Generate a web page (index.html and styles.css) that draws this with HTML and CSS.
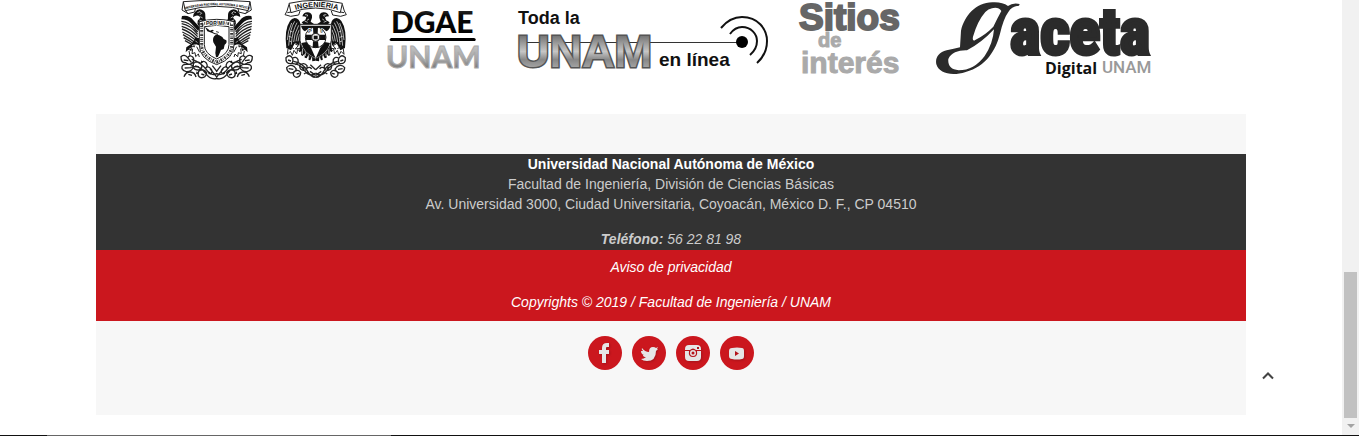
FILE: index.html
```html
<!DOCTYPE html>
<html lang="es">
<head>
<meta charset="utf-8">
<title>División de Ciencias Básicas</title>
<link rel="stylesheet" href="styles.css">
</head>
<body>
<div class="view">
  <div class="page">
    <nav class="logos" aria-label="Sitios relacionados">
      <a href="#" aria-label="Universidad Nacional Autónoma de México">
        <svg width="72" height="80" viewBox="30 0 216 240">
          <defs>
            <path id="arcU" d="M46 28Q140 3 236 28"/>
            <g id="halfU">
              <path class="ln" d="M40 5L46 32Q92 19 140 19M40 5Q90 1 140 1M40 5l-4 25 18 11 20-5 2-10M54 41l-8-10"/>
              <path class="fillk" d="M75 36q8-11 20-7 12 4 11 18-2 9 5 17l-10 1q-10 5-14 14-7-8-4-17l8-9q-3-8-13-6l-9 4q-1-8 6-15z"/>
              <path class="lnw" d="M82 38l8-3 5 5-6 4M91 50l7 4M88 60l8 3M86 68l6 2"/>
              <path class="fillk" d="M36 48Q58 44 70 61l19 21-4 11-22-23Q52 58 34 58z"/>
              <path class="feather" d="M34 64q24 0 49 32M35 71q26 4 48 32M35 79q26 7 48 31M36 87q25 9 45 30M37 96q24 10 44 27M39 104q22 12 39 26M41 113q19 9 35 23M45 122q15 7 29 19"/>
              <path class="fillk" d="M77 112l11 3 3 22-13-4-11 7-3 13-9-4-8 8 2-15 9-6q9-3 19-24z"/>
              <path class="lnw" d="M66 137l9-3 8 6M57 148l8-5M76 122l6 6"/>
              <path class="ln" d="M57 153l3 15M68 146l-2 15 9-3 2 12 8-8 3 9M80 140l9 17"/>
              <path class="ln2" d="M33 170q10-9 20 3 7-10 16-1 7 12-4 18-11 7-18-2-14 2-14-18zM53 173l11 14M36 206q-2-13 12-13 14-3 23 7-7 16-22 15-9-1-13-9zM42 230q6-15 19-14 14 1 17 15M70 190q15-10 23 2 7 11-5 17-12 4-18-7zM86 214q15-11 24 4-2 17-18 15-11-4-6-19zM92 190q8-11 17-1 7 11-4 17M105 205q9-10 18 2 8 10-4 16M62 202q26-8 43 16t36 17M65 178q28 9 44 31t32 11M120 206l21 26M127 197l14 18M41 180l14 2M44 204l20-1M55 223l11 3M75 198l12 3M94 222l9 3"/>
              <path class="fillk" d="M94 181l6 6-7 3zM116 214l7 6-8 3zM80 214l7 7-9 1z"/>
            </g>
          </defs>
          <use href="#halfU"/>
          <use href="#halfU" transform="matrix(-1 0 0 1 280 0)"/>
          <text class="banner-u"><textPath href="#arcU" startOffset="50%">UNIVERSIDAD NACIONAL AUTONOMA D MEXICO</textPath></text>
          <path class="shield" d="M88 65q53-14 104 0v70q0 41-52 59-52-18-52-59z"/>
          <path class="shield-band" d="M95 73q45-12 90 0v62q0 34-45 51-45-17-45-51z"/>
          <path class="shield-in" d="M103 80q36-8 74 0v54q0 27-37 43-37-16-37-43z"/>
          <path class="fillk" d="M105 81l9 6 6 5 7-3 5 3-6 3 9 5 8 1 2 3-10-1-10-5-13-4zM133 108q6-6 15-2l9 5 4 6 8 4q3 8-5 13l-3 13-8 3-6 14q-2 8-9 8l-2-13 2-19-8-13q-3-12 3-19zM139 94l8 2-1 2-8-2z"/>
          <text class="motto" x="108" y="76">POR MI</text>
        </svg>
      </a>
      <a href="#" aria-label="Facultad de Ingeniería">
        <svg width="66" height="80" viewBox="342 0 198 240">
          <defs>
            <path id="arcI" d="M366 33Q438 9 514 33"/>
            <g id="halfI">
              <path class="ln" d="M357 10Q396 1 437 1M363 38Q398 24 437 24M357 10l6 28M357 13l-6 20-6 11 17 5 24-4 4-12M363 36l-11 2"/>
              <path class="fillk" d="M397 49q4-13 17-12 14 2 12 16l-4 12 10 7-13 2-17 1-7-8 11-7 3-8q-3-3-12-3z"/>
              <path class="lnw" d="M405 44l8 1-2 5M404 63l9 4M417 57l-6 4"/>
              <path class="fillk" d="M374 54q15 1 17 18l3 28-6 37-13-9-12 23-14-7q-7-55 11-81 5-8 14-9z"/>
              <path class="lnw" d="M374 64q-14 20-18 73M381 68q-15 27-17 66M386 76q-14 26-15 50M388 89q-8 16-10 35M365 69q-12 26-13 51M389 102l-5 22M360 93l8 3M356 109l9 3M358 123l6 2"/>
              <path class="ln" d="M354 147l-2 16 9-9 6 12 5-15 8 11 3-14 8 7M373 130l12 7-9 10 15-2M359 139l13 7"/>
              <path class="fillk" d="M391 130l46 38v14l-10 2-2-13-4 10-5-1-1-15-5 10-6-2v-12l-6 7-5-3 1-11-7 3z"/>
              <path class="lnw" d="M398 140l-1 23M407 147l-1 21M416 153v22M425 158v22"/>
              <path class="ln2" d="M348 173q11-12 19 1 5 11-3 17-18 1-16-18zM366 176q12-9 18 3 3 12-9 15M350 203q9-12 23-3l6 7q-6 14-19 11-9-3-10-15zM371 216q14-11 21 2-1 13-13 14-12-3-8-16zM389 196q13-11 22 1 2 15-11 14-12-2-11-15zM364 191q23-3 39 20t34 8M371 184q29 6 40 27t26 21M410 205q10-7 15 2M402 222q11-9 19 2l16 8M354 180l9 3M356 206l14 2M380 222l8-2M395 201l9 4M420 214l17 12M421 194l16 15"/>
            </g>
          </defs>
          <use href="#halfI"/>
          <use href="#halfI" transform="matrix(-1 0 0 1 874 0)"/>
          <text class="banner-i"><textPath href="#arcI" startOffset="50%">INGENIERIA</textPath></text>
          <path class="shield" d="M390 73h94v48q-3 36-47 56-44-20-47-56z"/>
          <path class="fillk" d="M393 77h88q-2 13-12 17l-12-10h-40l-12 10q-9-4-12-17zM394 129l16-3 13 17 14 32q-36-17-43-46zM480 129l-16-3-13 17-14 32q36-17 43-46z"/>
          <circle class="wheel" cx="437" cy="112" r="31"/>
          <path class="fillk" d="M407 104h20v16h-20zM447 104h20v16h-20zM429 81h15l-1 20h-13zM429 124h15l2 19h-18z"/>
          <circle class="wheel-in" cx="437" cy="112" r="12"/>
          <path class="fillk" d="M431 107h12v11h-12z"/>
          <text class="fi" x="414" y="97">F</text><text class="fi" x="452" y="97">I</text>
        </svg>
      </a>
      <a href="#" aria-label="DGAE UNAM">
        <svg width="102" height="80" viewBox="382 0 102 80">
          <defs>
            <linearGradient id="gd" x1="0" y1="0" x2="0" y2="1"><stop offset="0" stop-color="#555"/><stop offset=".35" stop-color="#080808"/><stop offset="1" stop-color="#000"/></linearGradient>
            <linearGradient id="gs" x1="0" y1="0" x2="0" y2="1"><stop offset=".2" stop-color="#c4c4c4"/><stop offset=".6" stop-color="#a4a4a4"/><stop offset=".85" stop-color="#777"/></linearGradient>
          </defs>
          <text class="dgae" x="391" y="33">DGAE</text>
          <path d="M391 38H474q3 1 1 3L391 41Q388 40 391 38z"/>
          <text class="dgae-unam" x="386" y="68">UNAM</text>
        </svg>
      </a>
      <a href="#" aria-label="Toda la UNAM en línea">
        <svg width="250" height="80" viewBox="516 0 250 80">
          <defs>
            <linearGradient id="gu" x1="0" y1="0" x2="0" y2="1"><stop offset=".2" stop-color="#777"/><stop offset=".5" stop-color="#c6c6c6"/><stop offset=".66" stop-color="#888"/><stop offset=".85" stop-color="#aaa"/></linearGradient>
          </defs>
          <text class="toda" x="518" y="24">Toda la</text>
          <path class="wave-line" d="M520 42h222v1H520z"/>
          <text class="unam" x="517" y="67">UNAM</text>
          <text class="linea" x="659" y="66">en línea</text>
          <circle cx="742" cy="42" r="6"/>
          <path class="wave" d="M721 28Q730 17 742 17C758 17 767 29 767 41Q767 54 757 63M730 34Q735 27 742 27C751 27 757 34 757 41Q757 49 750 55"/>
        </svg>
      </a>
      <a href="#" aria-label="Sitios de interés">
        <svg width="104" height="80" viewBox="798 0 104 80">
          <text class="sitios" x="799" y="30">Sitios</text>
          <text class="de" x="818" y="47">de</text>
          <text class="interes" x="801" y="73">interés</text>
        </svg>
      </a>
      <a href="#" aria-label="Gaceta Digital UNAM">
        <svg width="218" height="80" viewBox="934 0 218 80">
          <path class="gac" fill-rule="evenodd" transform="translate(925) scale(.33333)" d="M284 12Q263 7 249 18Q231 5 202 7C151 9 119 47 108 92L105 142Q87 147 65 151C40 157 30 175 34 193C42 220 80 230 122 216C184 198 212 151 225 101Q236 55 250 36Q260 19 282 17zM201 25Q220 20 229 33Q215 59 205 80Q182 104 152 119Q141 127 144 110Q158 62 181 36Q190 27 201 25zM207 88Q204 131 179 168Q147 211 101 211C78 209 68 197 70 177C79 158 101 150 126 151Q169 129 207 88z"/>
          <text class="aceta" x="1010" y="54">aceta</text>
          <text class="digital" x="1045" y="74">Digital</text>
          <text class="gunam" x="1102" y="73">UNAM</text>
        </svg>
      </a>
    </nav>
    <footer class="footer">
      <div class="info">
        <p><strong class="name">Universidad Nacional Autónoma de México</strong><br>Facultad de Ingeniería, División de Ciencias Básicas<br>Av. Universidad 3000, Ciudad Universitaria, Coyoacán, México D. F., CP 04510</p>
        <p class="it"><strong>Teléfono:</strong> 56 22 81 98</p>
      </div>
      <div class="legal">
        <p><a href="#">Aviso de privacidad</a></p>
        <p>Copyrights © 2019 / Facultad de Ingeniería / UNAM</p>
      </div>
      <div class="social">
        <a href="#" aria-label="Facebook"><svg viewBox="0 0 34 34"><path d="M14 27V18h-3v-4h3v-2q0-5 5-5h2v4h-2q-1 0-1 1v2h3v4h-3v9z"/></svg></a>
        <a href="#" aria-label="Twitter"><svg viewBox="0 0 34 34"><path d="M10 12q3 4 7 4 0-5 4-5 2 0 3 1l2-1-1 2h1l-2 2q0 10-9 10-4 0-6-2 3 0 5-2-3 0-3-2h1q-3-1-3-4h2q-2-2-1-3z"/></svg></a>
        <a href="#" aria-label="Instagram"><svg viewBox="0 0 34 34"><path fill-rule="evenodd" d="M13 9h8q4 0 4 4v1h-5q-3-3-6 0H9v-1q0-4 4-4zM9 15h4q-1 6 4 6t4-6h4v6q0 4-4 4h-8q-4 0-4-4zM21 11v2h2v-2zM17 14a3 3 0 1 1 0 6 3 3 0 0 1 0-6zM17 15.500a1.500 1.500 0 1 0 0 3 1.500 1.500 0 0 0 0-3z"/></svg></a>
        <a href="#" aria-label="YouTube"><svg viewBox="0 0 34 34"><path fill-rule="evenodd" d="M12 12q5-1 10 0 2 0 2 3v5q0 3-2 3-5 1-10 0-3 0-3-3v-5q0-3 3-3zM15 15v5l4-2.500z"/></svg></a>
      </div>
    </footer>
    <button class="to-top" type="button" aria-label="Volver arriba"><svg width="12" height="9" viewBox="0 0 12 9"><path d="M1 7.500L6 2.500 11 7.500"/></svg></button>
  </div>
  <div class="scroll" aria-hidden="true">
    <div class="thumb"></div>
    <svg width="8" height="5" viewBox="0 0 8 5"><path d="M0 0h8L4 4z"/></svg>
  </div>
</div>
<div class="taskbar"></div>
</body>
</html>
```
FILE: styles.css
```css
* { box-sizing: border-box; }
body {
  margin: 0;
  min-height: 100vh;
  display: flex;
  flex-direction: column;
  background: #fff;
  color: #ccc;
  font: 14px/20px "Liberation Sans", Arial, sans-serif;
}
svg { display: block; overflow: visible; }
p { margin: 0; }
a { color: inherit; text-decoration: none; }
.view { flex: 1; display: flex; }
.page { flex: 1; position: relative; padding: 0 96px; }

.logos {
  display: flex;
  justify-content: center;
  gap: 32px;
  padding: 0 10px 34px 0;
}
.logos text { font-family: "Liberation Sans", Arial, sans-serif; font-weight: bold; }
.fillk { fill: #111; }
.ln { fill: none; stroke: #222; stroke-width: 3px; }
.ln2 { fill: none; stroke: #222; stroke-width: 4px; }
.lnw { fill: none; stroke: #fff; stroke-width: 2px; }
.feather { fill: none; stroke: #222; stroke-width: 4px; }
.shield { fill: #fff; stroke: #222; stroke-width: 3px; }
.shield-band { fill: none; stroke: #333; stroke-width: 9px; stroke-dasharray: 5px 3px 2px 3px; }
.shield-in { fill: #fff; stroke: #222; stroke-width: 3px; }
.wheel { fill: #fff; stroke: #222; stroke-width: 3px; }
.wheel-in { fill: #fff; stroke: #333; stroke-width: 4px; }
.logos .banner-u { font: 700 10px "Roboto Condensed", Roboto, sans-serif; fill: #111; text-anchor: middle; }
.logos .banner-i { font-size: 22px; fill: #111; text-anchor: middle; }
.logos .motto { font-size: 15px; fill: #111; stroke: #fff; stroke-width: 3px; paint-order: stroke; }
.logos .fi { font-size: 16px; fill: #fff; stroke: #111; stroke-width: 3px; paint-order: stroke; }
.logos .dgae { font: 900 30px Lato, sans-serif; fill: url(#gd); }
.logos .dgae-unam { font: 700 30px Lato, sans-serif; fill: url(#gs); stroke: #aaa; stroke-width: 1px; }
.logos .toda { font-size: 18px; fill: #111; }
.logos .linea { font-size: 19px; fill: #111; }
.logos .unam { font-size: 45px; fill: url(#gu); stroke: #555; stroke-width: 3px; paint-order: stroke; }
.wave-line { fill: #333; }
.wave { fill: none; stroke: #111; stroke-width: 2px; }
.logos .sitios { font-size: 37px; fill: #666; stroke: #666; stroke-width: 2px; }
.logos .de { font-size: 20px; fill: #aaa; stroke: #aaa; stroke-width: 1px; }
.logos .interes { font-size: 30px; fill: #aaa; stroke: #aaa; stroke-width: 1px; }
.gac { fill: #2b2b2b; }
.logos .aceta { font-family: "Roboto Condensed", "Liberation Sans", sans-serif; font-size: 64px; fill: #2b2b2b; stroke: #2b2b2b; stroke-width: 4px; }
.logos .digital { font: 700 16px "Open Sans", sans-serif; fill: #111; }
.logos .gunam { font: 500 17px Roboto, sans-serif; fill: #999; }

.footer { padding: 40px 0 45px; background: #f7f7f7; text-align: center; }
.info { display: grid; gap: 15px; padding-bottom: 1px; background: #333; }
.name { color: #fff; }
.it, .legal { font-style: italic; }
.legal { display: grid; gap: 15px; padding: 7px 0 9px; background: #cb171e; color: #fff; }
.social { display: flex; justify-content: center; gap: 10px; padding-top: 15px; }
.social a { width: 34px; height: 34px; border-radius: 50%; background: #cb171e; }
.social path { fill: #e6e6e6; filter: drop-shadow(1px 1px 1px #a5131a); }

.to-top {
  position: absolute;
  right: 68px;
  bottom: 55px;
  padding: 0;
  border: 0;
  background: none;
}
.to-top path { fill: none; stroke: #444; stroke-width: 2px; }
.scroll {
  width: 17px;
  display: flex;
  flex-direction: column;
  align-items: center;
  justify-content: flex-end;
  gap: 6px;
  padding-bottom: 6px;
  background: #f1f1f1;
}
.scroll path { fill: #a3a3a3; }
.thumb { width: 13px; height: 34%; background: #c1c1c1; }
.taskbar { height: 1px; background: linear-gradient(90deg, #111 47px, #666 47px, #666 391px, #111 391px); }
```
